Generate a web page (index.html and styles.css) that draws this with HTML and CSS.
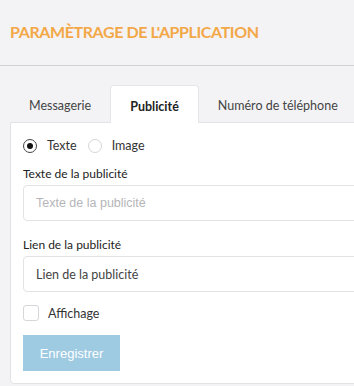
FILE: index.html
```html
<!DOCTYPE html>
<html lang="fr">
<head>
    <meta charset="UTF-8">
    <meta name="viewport" content="width=device-width, initial-scale=1.0">
    <title>Paramètrage de l'application</title>
    <link rel="stylesheet" href="styles.css">
</head>
<body>
    <div class="page-header">
        <div class="page-title">PARAMÈTRAGE DE L'APPLICATION</div>
    </div>

    <div class="content">
        <!-- Tabs -->
        <div class="tabs">
            <div class="tab">Messagerie</div>
            <div class="tab active">Publicité</div>
            <div class="tab">Numéro de téléphone</div>
        </div>

        <!-- Publicité panel -->
        <div class="panel">
            <div class="radio-row">
                <label class="radio">
                    <span class="radio-dot checked"></span>
                    <span>Texte</span>
                </label>
                <label class="radio">
                    <span class="radio-dot"></span>
                    <span>Image</span>
                </label>
            </div>

            <div class="field first">
                <div class="field-label">Texte de la publicité</div>
                <div class="input placeholder">Texte de la publicité</div>
            </div>

            <div class="field">
                <div class="field-label">Lien de la publicité</div>
                <div class="input">Lien de la publicité</div>
            </div>

            <label class="check-row">
                <span class="checkbox"></span>
                <span>Affichage</span>
            </label>

            <button class="btn-save">Enregistrer</button>
        </div>
    </div>
</body>
</html>
```

FILE: styles.css
```css
body {
    margin: 0;
    padding: 0;
    background-color: #f3f3f6;
    font-family: Lato, "Open Sans", sans-serif;
    color: #333;
    overflow: hidden;
}
.page-header {
    height: 65px;
    border-bottom: 1px solid #cfcfd4;
    padding-left: 10px;
    display: flex;
    align-items: center;
}
.page-title {
    color: #f3a847;
    font-weight: bold;
    font-size: 16px;
    letter-spacing: -0.4px;
    margin-top: -2px;
}
.content {
    width: 420px;
    padding: 19px 0 0 10px;
}
.tabs {
    display: flex;
    height: 37px;
}
.tab {
    padding: 0 19px;
    font-size: 12.5px;
    color: #444;
    display: flex;
    align-items: center;
    padding-top: 3px;
    box-sizing: border-box;
    border-radius: 4px 4px 0 0;
}
.tab.active {
    background-color: white;
    font-weight: bold;
    color: #222;
    border: 1px solid #e6e6ea;
    border-bottom: none;
    margin-bottom: -1px;
    position: relative;
}
.panel {
    background-color: white;
    border: 1px solid #e3e3e6;
    border-radius: 0 0 0 4px;
    padding: 15px 0 12px 12px;
}
.radio-row {
    display: flex;
    gap: 11px;
    font-size: 12.5px;
    color: #333;
    height: 15px;
}
.radio {
    display: flex;
    align-items: center;
    gap: 10px;
}
.radio-dot {
    width: 12px;
    height: 12px;
    border: 1px solid #d6d6da;
    border-radius: 50%;
    display: flex;
    align-items: center;
    justify-content: center;
}
.radio-dot.checked {
    border-color: #444;
}
.radio-dot.checked::after {
    content: "";
    width: 6px;
    height: 6px;
    border-radius: 50%;
    background-color: #111;
}
.field {
    margin-top: 16px;
}
.field.first {
    margin-top: 13px;
}
.field-label {
    font-size: 12px;
    line-height: 15px;
    color: #222;
    margin-bottom: 4px;
}
.input {
    height: 36px;
    border: 1px solid #e3e3e6;
    border-radius: 4px;
    box-sizing: border-box;
    padding: 0 12px;
    display: flex;
    align-items: center;
    font-size: 12.5px;
    color: #444;
}
.input.placeholder {
    color: #b5b5b8;
    font-family: "Liberation Sans", Arial, sans-serif;
}
.check-row {
    display: flex;
    align-items: center;
    gap: 9px;
    margin-top: 13px;
    font-size: 12.5px;
    color: #333;
}
.checkbox {
    width: 14px;
    height: 14px;
    border: 1px solid #d6d6da;
    border-radius: 3px;
}
.btn-save {
    margin-top: 14px;
    width: 97px;
    height: 36px;
    border: none;
    background-color: #9ecae2;
    color: white;
    font-family: "Liberation Sans", Arial, sans-serif;
    font-size: 13px;
    display: block;
}
```
